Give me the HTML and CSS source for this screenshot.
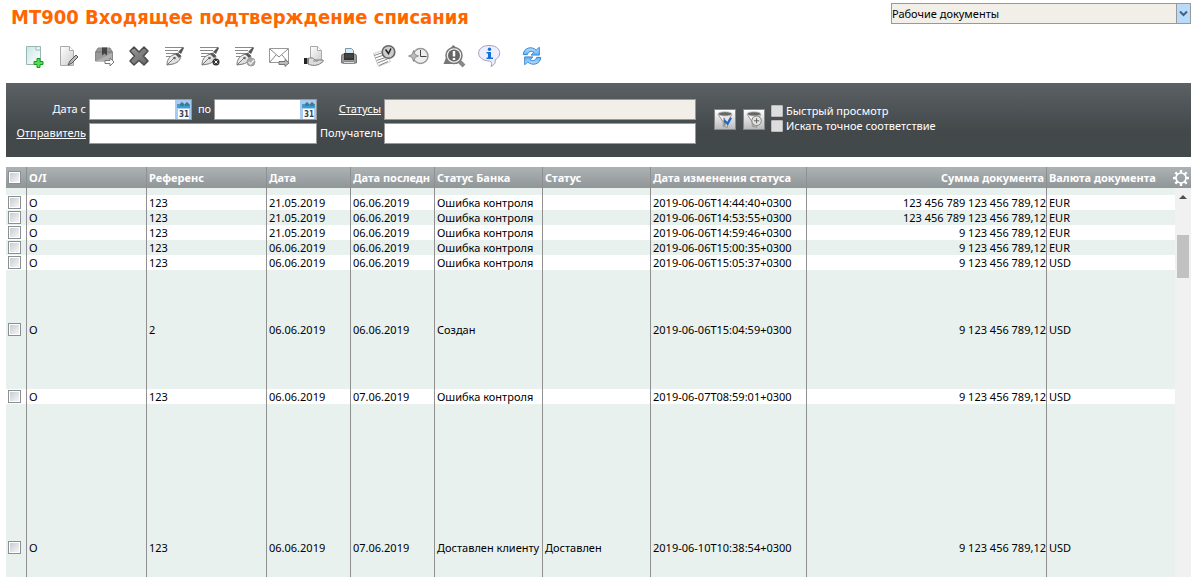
FILE: index.html
```html
<!DOCTYPE html>
<html lang="ru">
<head>
<meta charset="utf-8">
<title>MT900 Входящее подтверждение списания</title>
<link rel="stylesheet" href="styles.css">
</head>
<body>
<svg class="defs" aria-hidden="true">
  <defs>
    <linearGradient id="paper" x1="0" y1="0" x2="1" y2="1"><stop offset="0" stop-color="#fff"/><stop offset="1" stop-color="#ccc"/></linearGradient>
    <linearGradient id="mint" x1="0" y1="0" x2="1" y2="1"><stop offset="0" stop-color="#c9e6e6"/><stop offset="1" stop-color="#fff"/></linearGradient>
    <linearGradient id="blue" x1="0" y1="0" x2="0" y2="1"><stop offset="0" stop-color="#c4e4ff"/><stop offset="1" stop-color="#5aaef8"/></linearGradient>
    <linearGradient id="dark" x1="0" y1="0" x2="1" y2="1"><stop offset="0" stop-color="#999"/><stop offset="1" stop-color="#666"/></linearGradient>
    <g id="pen">
      <path d="M3 3.500h18M3 6.500h13M4 9.500h10M4 12.500h6" stroke="#888"/>
      <path d="M16 8l5-5 1 1-3 6z" fill="#555"/>
      <path d="M5 21c0-5 2-8 6-10l5-2 3 3c-1 5-4 7-8 8z" fill="url(#paper)" stroke="#777"/>
      <path d="M15 9l4 3-2 2-4-4z" fill="#555"/>
      <path d="M5 21l7-7" stroke="#777"/><circle cx="12.500" cy="14" r="1.300" fill="#666"/>
    </g>
    <g id="funnel">
      <path d="M3 5l6 9v5l5 1v-6l5-9z" fill="url(#paper)" stroke="#888"/>
      <path d="M10 9l1 9" stroke="#888" stroke-width="2"/>
      <ellipse cx="11" cy="4.500" rx="8" ry="2.500" fill="#666" stroke="#ccc"/>
    </g>
    <g id="turn">
      <path d="M2.500 10.500c0-7 9-10 14-5l3.500-3v8.500h-9l3-3c-3-2-6-1-7 2.500z" fill="url(#blue)" stroke="#2f80d0"/>
    </g>
  </defs>
</svg>

<header class="head">
  <h1 class="title">MT900 Входящее подтверждение списания</h1>
  <div class="view">
    <select class="view-select" aria-label="Представление"><option>Рабочие документы</option></select>
    <span class="view-arrow"><svg width="9" height="7" viewBox="0 0 9 7"><path d="M1 1.500l3.500 3.500 3.500-3.500" fill="none" stroke="#456080" stroke-width="2"/></svg></span>
  </div>
</header>

<nav class="toolbar" aria-label="Действия">
  <button class="tool" aria-label="Создать"><svg viewBox="0 0 24 24"><path d="M4.500 2.500h14v18h-14z" fill="url(#mint)" stroke="#9ab5b5"/><path d="M14 3v3h4" fill="#fff" stroke="#9bb5b5"/><path d="M15 14.500h3v3h3v3h-3v3h-3v-3h-3v-3h3z" fill="#5d5" stroke="#119a1a"/></svg></button>
  <button class="tool" aria-label="Изменить"><svg viewBox="0 0 24 24"><path d="M3.500 2.500h9l4 4v15h-13z" fill="url(#paper)" stroke="#aaa"/><path d="M12.500 2.500v4h4" fill="#fff" stroke="#aaa"/><path d="M11 21l2-4 6-6 2 2-6 6z" fill="#bbb" stroke="#555"/></svg></button>
  <button class="tool" aria-label="Отправить в архив"><svg viewBox="0 0 24 24"><path d="M6 4h12l2.500 4v9h-17v-9z" fill="#999" stroke="#888"/><path d="M4 8h16" stroke="#777"/><path d="M4 17l16-8v8z" fill="#b0b0b0"/><path d="M10 3.500h5v8l-2.500-2-2.500 2z" fill="#444"/><path d="M13 16.500h5v-2.500l4 4-4 4v-2.500h-5z" fill="#fff" stroke="#777"/></svg></button>
  <button class="tool" aria-label="Удалить"><svg viewBox="0 0 24 24"><path d="M7 3l5 5 5-5 4 4-4.500 5 4.500 5-4 4-5-4.500-5 4.500-4-4 4.500-5-4.500-5z" fill="url(#dark)" stroke="#4a4a4a" stroke-width="1.500" stroke-linejoin="round"/></svg></button>
  <button class="tool" aria-label="Подписать"><svg viewBox="0 0 24 24"><use href="#pen"/></svg></button>
  <button class="tool" aria-label="Снять подпись"><svg viewBox="0 0 24 24"><use href="#pen"/><circle cx="19" cy="18" r="3.500" fill="#333"/><path d="M17.500 16.500l3 3M20.500 16.500l-3 3" stroke="#fff"/></svg></button>
  <button class="tool" aria-label="Проверить подпись"><svg viewBox="0 0 24 24"><use href="#pen"/><circle cx="19" cy="18" r="4" fill="#aaa" stroke="#999"/><path d="M16.500 18l2 2 3.500-4" fill="none" stroke="#eee" stroke-width="1.500"/></svg></button>
  <button class="tool" aria-label="Отправить"><svg viewBox="0 0 24 24"><path d="M2.500 4.500h19v14h-19z" fill="#fff" stroke="#999"/><path d="M3 5l9 8 9-8M3 18l6-7M21 18l-6-7" fill="none" stroke="#888"/><path d="M12 17.500h6v-2l4 3.500-4 3.500v-2h-6z" fill="#bbb" stroke="#777"/></svg></button>
  <button class="tool" aria-label="Передать"><svg viewBox="0 0 24 24"><path d="M8.500 2.500h7l4 4v11h-11z" fill="url(#paper)" stroke="#aaa"/><path d="M15.500 2.500v4h4" fill="#fff" stroke="#aaa"/><path d="M6 14.500c3-1 5-1 7 1.500h8c1 1 0 2-2 3-4 3-9 3-13 1z" fill="#ddd" stroke="#777"/><path d="M11 17h5" stroke="#888"/><path d="M2 14h3v6h-3z" fill="#222"/><path d="M5 14h2v6h-2z" fill="#888"/></svg></button>
  <button class="tool" aria-label="Печать"><svg viewBox="0 0 24 24"><path d="M8.500 4.500h6l2 2v6h-8z" fill="#d8eaf2" stroke="#7899a8"/><path d="M4.500 12q0-2 2-2h11q2 0 2 2v7h-15z" fill="#999" stroke="#777"/><path d="M7 9h10v7h-10z" fill="#333"/><path d="M8 11h8M8 13h8" stroke="#555"/><path d="M6.500 17.500h11v2h-11z" fill="#ddd" stroke="#888"/></svg></button>
  <button class="tool" aria-label="Расписание"><svg viewBox="0 0 24 24"><path d="M1.500 9.500l10-3 7 11-12 5z" fill="#fff" stroke="#ccc"/><path d="M2 11.500l9-3M3 14l9-3M4.500 16.500l9-3M5.500 19l10-4M7 21.500l9-4" stroke="#888"/><circle cx="16.500" cy="8" r="6.300" fill="#ccc" stroke="#666" stroke-width="1.600"/><path d="M13.500 5.500l3 4 2.500-5" fill="none" stroke="#222" stroke-width="1.500"/></svg></button>
  <button class="tool" aria-label="История"><svg viewBox="0 0 24 24"><circle cx="13.500" cy="12" r="7.500" fill="#eee" stroke="#999" stroke-width="1.500"/><path d="M13.500 6v6.500h6" fill="none" stroke="#444"/><path d="M1.500 12l3.500-1.500 1.500-4 1.500 4 3.500 1.500-3.500 1.500-1.500 4-1.500-4z" fill="#bbb" stroke="#777" stroke-width=".7"/></svg></button>
  <button class="tool" aria-label="Протокол"><svg viewBox="0 0 24 24"><path d="M1.500 20l4-10 10 10zM8 5l3-4 4 3z" fill="#777"/><path d="M17 17l5 5" stroke="#888" stroke-width="4"/><circle cx="12" cy="11.500" r="8" fill="#eee" stroke="#777" stroke-width="1.500"/><circle cx="12" cy="11.500" r="6" fill="#666"/><path d="M12 7v5.500M12 14v2" stroke="#fff" stroke-width="2.500"/></svg></button>
  <button class="tool" aria-label="Справка"><svg viewBox="0 0 24 24"><path d="M12 1.500c13 0 13 11 6 14.500 1 3-1 5-4 6.500 1-2 1-4-1-5.500-15 0-15-15.500-1-15.500z" fill="#eeeeff" stroke="#a0a0c0"/><path d="M9.500 8h4.500v5.500h2v1.500h-6.500v-1.500h1.500v-4h-1.500z" fill="#1470d8"/><circle cx="12.500" cy="5.300" r="1.700" fill="#1470d8"/></svg></button>
  <button class="tool tool-refresh" aria-label="Обновить"><svg viewBox="0 0 24 24"><use href="#turn"/><use href="#turn" transform="rotate(180 12 12)"/></svg></button>
</nav>

<form class="filters">
  <div class="fields">
    <label class="caption" for="from">Дата с</label>
    <div class="dates">
      <span class="date"><input class="date-input" id="from"><button class="cal" type="button" aria-label="Выбрать дату"><svg width="16" height="19" viewBox="0 0 16 19"><path d="M2 4h13v4h-13z" fill="#3aa0c8"/><path d="M3 9h11v10h-11z" fill="#fff"/><path d="M6 6v-3h2v3M11 6v-3h2v3" fill="none" stroke="#456"/><text class="cal-day" x="4" y="17">31</text></svg></button></span>
      <label class="caption" for="to">по</label>
      <span class="date"><input class="date-input" id="to"><button class="cal" type="button" aria-label="Выбрать дату"><svg width="16" height="19" viewBox="0 0 16 19"><path d="M2 4h13v4h-13z" fill="#3aa0c8"/><path d="M3 9h11v10h-11z" fill="#fff"/><path d="M6 6v-3h2v3M11 6v-3h2v3" fill="none" stroke="#456"/><text class="cal-day" x="4" y="17">31</text></svg></button></span>
    </div>
    <a class="caption" href="#statuses">Статусы</a>
    <input class="field field-readonly" id="statuses" aria-label="Статусы" readonly>
    <a class="caption" href="#sender">Отправитель</a>
    <input class="field" id="sender" aria-label="Отправитель">
    <label class="caption" for="receiver">Получатель</label>
    <input class="field" id="receiver">
  </div>
  <div class="apply">
    <button class="filter-btn" type="button" aria-label="Применить фильтр"><svg viewBox="0 0 22 22"><use href="#funnel"/><path d="M10 12l4 4 4-7" fill="none" stroke="#1d68c8" stroke-width="2.500"/></svg></button>
    <button class="filter-btn" type="button" aria-label="Добавить фильтр"><svg viewBox="0 0 22 22"><use href="#funnel"/><circle cx="14" cy="12.500" r="5.500" fill="#e4e4e4" stroke="#777"/><path d="M14 9.500v6M11 12.500h6" stroke="#555"/></svg></button>
  </div>
  <div class="options">
    <label class="option"><input class="option-box" type="checkbox">Быстрый просмотр</label>
    <label class="option"><input class="option-box" type="checkbox">Искать точное соответствие</label>
  </div>
</form>

<main class="list">
  <table class="grid">
    <colgroup><col class="w-check"><col class="w-ref"><col class="w-ref"><col class="w-date"><col class="w-date"><col class="w-status"><col class="w-status"><col class="w-stamp"><col class="w-sum"><col><col class="w-bar"></colgroup>
    <thead>
      <tr><th><input class="check" type="checkbox" aria-label="Выбрать все"></th><th>O/I</th><th>Референс</th><th>Дата</th><th>Дата последн</th><th>Статус Банка</th><th>Статус</th><th>Дата изменения статуса</th><th class="sum">Сумма документа</th><th class="last">Валюта документа</th><th class="last tune"><button class="gear" aria-label="Настройка"><svg width="18" height="18" viewBox="0 0 18 18"><circle cx="9" cy="9" r="5" fill="none" stroke="#fff" stroke-width="1.600"/><path d="M9 1v3M9 14v3M1 9h3M14 9h3M3.300 3.300l2.200 2.200M12.500 12.500l2.200 2.200M3.300 14.700l2.200-2.200M12.500 5.500l2.200-2.200" stroke="#fff" stroke-width="2.400"/></svg></button></th></tr>
    </thead>
    <tbody>
      <tr class="cut"><td></td><td></td><td></td><td></td><td></td><td></td><td></td><td></td><td></td><td class="last"></td><td class="last"></td></tr>
      <tr><td><input class="check" type="checkbox" aria-label="Выбрать"></td><td>O</td><td>123</td><td>21.05.2019</td><td>06.06.2019</td><td>Ошибка контроля</td><td></td><td>2019-06-06T14:44:40+0300</td><td class="sum">123 456 789 123 456 789,12</td><td class="last">EUR</td><td class="last"></td></tr>
      <tr><td><input class="check" type="checkbox" aria-label="Выбрать"></td><td>O</td><td>123</td><td>21.05.2019</td><td>06.06.2019</td><td>Ошибка контроля</td><td></td><td>2019-06-06T14:53:55+0300</td><td class="sum">123 456 789 123 456 789,12</td><td class="last">EUR</td><td class="last"></td></tr>
      <tr><td><input class="check" type="checkbox" aria-label="Выбрать"></td><td>O</td><td>123</td><td>21.05.2019</td><td>06.06.2019</td><td>Ошибка контроля</td><td></td><td>2019-06-06T14:59:46+0300</td><td class="sum">9 123 456 789,12</td><td class="last">EUR</td><td class="last"></td></tr>
      <tr><td><input class="check" type="checkbox" aria-label="Выбрать"></td><td>O</td><td>123</td><td>06.06.2019</td><td>06.06.2019</td><td>Ошибка контроля</td><td></td><td>2019-06-06T15:00:35+0300</td><td class="sum">9 123 456 789,12</td><td class="last">EUR</td><td class="last"></td></tr>
      <tr><td><input class="check" type="checkbox" aria-label="Выбрать"></td><td>O</td><td>123</td><td>06.06.2019</td><td>06.06.2019</td><td>Ошибка контроля</td><td></td><td>2019-06-06T15:05:37+0300</td><td class="sum">9 123 456 789,12</td><td class="last">USD</td><td class="last"></td></tr>
      <tr class="tall"><td><input class="check" type="checkbox" aria-label="Выбрать"></td><td>O</td><td>2</td><td>06.06.2019</td><td>06.06.2019</td><td>Создан</td><td></td><td>2019-06-06T15:04:59+0300</td><td class="sum">9 123 456 789,12</td><td class="last">USD</td><td class="last"></td></tr>
      <tr><td><input class="check" type="checkbox" aria-label="Выбрать"></td><td>O</td><td>123</td><td>06.06.2019</td><td>07.06.2019</td><td>Ошибка контроля</td><td></td><td>2019-06-07T08:59:01+0300</td><td class="sum">9 123 456 789,12</td><td class="last">USD</td><td class="last"></td></tr>
      <tr class="taller"><td><input class="check" type="checkbox" aria-label="Выбрать"></td><td>O</td><td>123</td><td>06.06.2019</td><td>07.06.2019</td><td>Доставлен клиенту</td><td>Доставлен</td><td>2019-06-10T10:38:54+0300</td><td class="sum">9 123 456 789,12</td><td class="last">USD</td><td class="last"></td></tr>
    </tbody>
  </table>
  <div class="bar" aria-hidden="true"><svg width="16" height="17" viewBox="0 0 16 17"><path d="M4 11l4-4 4 4z" fill="#505050"/></svg><div class="thumb"></div></div>
</main>
</body>
</html>
```
FILE: styles.css
```css
* { box-sizing: border-box; }
body {
  margin: 0;
  height: 100vh;
  overflow: hidden;
  display: flex;
  flex-direction: column;
  background: #fff;
  color: #000;
  font: 11px/15px "Noto Sans", sans-serif;
}
input, button, select { margin: 0; font: inherit; color: inherit; }
button { padding: 0; border: 0; background: none; }
.defs { position: absolute; width: 0; height: 0; }

.head {
  display: flex;
  justify-content: space-between;
  align-items: flex-start;
  padding: 3px 3px 0 11px;
  height: 44px;
}
.title {
  margin: 0;
  color: #ff6600;
  font: bold 20px/28px "DejaVu Sans Condensed", "DejaVu Sans", sans-serif;
  white-space: nowrap;
}
.view { position: relative; width: 300px; }
.view-select {
  display: block;
  width: 100%;
  height: 21px;
  padding: 0 20px 0 0;
  border: 1px solid #999;
  border-radius: 0;
  background: #f2eee8;
  appearance: none;
}
.view-arrow {
  position: absolute;
  top: 1px;
  right: 1px;
  bottom: 1px;
  width: 14px;
  display: grid;
  place-items: center;
  border-left: 1px solid #999;
  background: #b9dbfb;
  pointer-events: none;
}

.toolbar { display: flex; gap: 11px; padding: 0 22px; }
.tool { width: 24px; height: 24px; }
.tool svg { display: block; width: 24px; height: 24px; fill: none; }
.tool-refresh { margin-left: 8px; }
.tool-refresh svg { padding: 1px; }

.filters {
  display: flex;
  align-items: flex-start;
  margin: 15px 3px 10px 6px;
  padding: 16px 0 13px;
  background: linear-gradient(#5c6165, #43484b 65%);
  color: #fff;
}
.fields {
  display: grid;
  grid-template-columns: 80px 228px 61px 312px;
  gap: 3px;
}
.caption { color: #fff; line-height: 19px; text-align: right; white-space: nowrap; }
.dates { display: flex; justify-content: space-between; }
.dates .caption { padding-left: 3px; }
.date { display: flex; width: 103px; height: 21px; border: 1px solid #999; }
.date-input { flex: 1; min-width: 0; border: 0; padding: 0 2px; background: #fff; color: #000; }
.cal { width: 16px; background: #a9cbf2; }
.cal svg { display: block; }
.cal-day { font: bold 8px "DejaVu Sans Condensed", sans-serif; fill: #345; }
.field { height: 21px; min-width: 0; border: 1px solid #999; border-radius: 0; padding: 0 2px; background: #fff; color: #000; }
.field-readonly { background: #f2eee8; }
.apply { display: flex; gap: 7px; margin: 10px 6px 0 18px; }
.filter-btn { width: 22px; height: 21px; border: 1px solid #888; background: linear-gradient(#fff, #bbb); }
.filter-btn svg { display: block; width: 20px; height: 19px; fill: none; }
.options { display: grid; padding-top: 4px; }
.option { display: flex; align-items: center; gap: 3px; height: 15px; white-space: nowrap; }
.option-box { width: 12px; height: 12px; appearance: none; background: #ddd; border: 1px solid #bbb; border-radius: 1px; }

.list {
  position: relative;
  flex: 1;
  min-height: 0;
  overflow: hidden;
  margin: 0 3px 0 6px;
  background: #e8f1ee;
}
.grid { width: 100%; table-layout: fixed; border-collapse: separate; border-spacing: 0; }
.w-check { width: 21px; }
.w-ref { width: 120px; }
.w-date { width: 84px; }
.w-status { width: 108px; }
.w-stamp { width: 156px; }
.w-sum { width: 240px; }
.w-bar { width: 19px; }
.grid th, .grid td {
  padding: 0 0 0 2px;
  border-right: 1px solid #909090;
  overflow: hidden;
  white-space: nowrap;
  text-align: left;
  vertical-align: middle;
}
.grid .last { border-right: 0; }
.grid .sum { text-align: right; }
.grid th { height: 21px; color: #fff; }
.grid th.sum { padding-right: 2px; }
.grid th.tune { padding-left: 0; }
.grid thead { background: linear-gradient(#adb2b5, #909598); }
.grid tbody tr { height: 15px; background: #e8f1ee; }
.grid tbody tr:nth-child(even) { background: #fff; }
.grid tbody .cut { height: 7px; }
.grid tbody .tall { height: 119px; }
.grid tbody .taller { height: 286px; }
.check {
  display: block;
  width: 13px;
  height: 13px;
  appearance: none;
  border: 1px solid #8a8f92;
  background: linear-gradient(135deg, #c8ccd2, #f6f6f6) content-box, #fff;
  padding: 1px;
}
.gear { display: block; }
.gear svg { display: block; }
.bar { position: absolute; top: 21px; right: 0; bottom: 0; width: 16px; background: #f1f1f1; }
.bar svg { display: block; }
.thumb { height: 43px; margin: 30px 2px 0; background: #c1c1c1; }
```
